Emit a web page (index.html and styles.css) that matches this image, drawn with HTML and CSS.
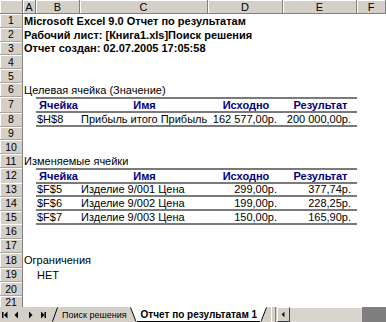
FILE: index.html
```html
<!DOCTYPE html>
<html lang="ru">
<head>
    <meta charset="UTF-8">
    <title>Отчет по результатам 1</title>
    <link rel="stylesheet" href="styles.css">
</head>
<body>
    <div class="sheet">
        <div class="row head">
            <div class="corner"></div>
            <div class="ch">A</div>
            <div class="ch">B</div>
            <div class="ch">C</div>
            <div class="ch">D</div>
            <div class="ch">E</div>
            <div class="ch">F</div>
        </div>
        <div class="row"><div class="rh">1</div><div class="cell wide bold">Microsoft Excel 9.0 Отчет по результатам</div></div>
        <div class="row"><div class="rh">2</div><div class="cell wide bold">Рабочий лист: [Книга1.xls]Поиск решения</div></div>
        <div class="row"><div class="rh">3</div><div class="cell wide bold">Отчет создан: 02.07.2005 17:05:58</div></div>
        <div class="row"><div class="rh">4</div></div>
        <div class="row"><div class="rh">5</div></div>
        <div class="row"><div class="rh">6</div><div class="cell wide">Целевая ячейка (Значение)</div></div>

        <div class="row tall">
            <div class="rh">7</div><div class="cell"></div>
            <div class="cell th bt bb">Ячейка</div>
            <div class="cell th bt bb">Имя</div>
            <div class="cell th bt bb">Исходно</div>
            <div class="cell th bt bb">Результат</div>
        </div>
        <div class="row">
            <div class="rh">8</div><div class="cell"></div>
            <div class="cell bb">$H$8</div>
            <div class="cell bb">Прибыль итого Прибыль</div>
            <div class="cell num bb">162 577,00р.</div>
            <div class="cell num bb">200 000,00р.</div>
        </div>
        <div class="row"><div class="rh">9</div></div>
        <div class="row"><div class="rh">10</div></div>
        <div class="row"><div class="rh">11</div><div class="cell wide">Изменяемые ячейки</div></div>

        <div class="row mid">
            <div class="rh">12</div><div class="cell"></div>
            <div class="cell th bt bb">Ячейка</div>
            <div class="cell th bt bb">Имя</div>
            <div class="cell th bt bb">Исходно</div>
            <div class="cell th bt bb">Результат</div>
        </div>
        <div class="row">
            <div class="rh">13</div><div class="cell"></div>
            <div class="cell bb">$F$5</div>
            <div class="cell bb">Изделие 9/001 Цена</div>
            <div class="cell num bb">299,00р.</div>
            <div class="cell num bb">377,74р.</div>
        </div>
        <div class="row">
            <div class="rh">14</div><div class="cell"></div>
            <div class="cell bb">$F$6</div>
            <div class="cell bb">Изделие 9/002 Цена</div>
            <div class="cell num bb">199,00р.</div>
            <div class="cell num bb">228,25р.</div>
        </div>
        <div class="row">
            <div class="rh">15</div><div class="cell"></div>
            <div class="cell bb">$F$7</div>
            <div class="cell bb">Изделие 9/003 Цена</div>
            <div class="cell num bb">150,00р.</div>
            <div class="cell num bb">165,90р.</div>
        </div>
        <div class="row low"><div class="rh">16</div></div>
        <div class="row low"><div class="rh">17</div></div>
        <div class="row low"><div class="rh">18</div><div class="cell wide">Ограничения</div></div>
        <div class="row low"><div class="rh">19</div><div class="cell"></div><div class="cell">НЕТ</div></div>
        <div class="row low"><div class="rh">20</div></div>
        <div class="row last"><div class="rh">21</div></div>
    </div>

    <div class="tabbar">
        <svg class="nav" width="52" height="15" viewBox="0 0 52 15">
            <rect x="2" y="5" width="1.5" height="6" fill="#000"/>
            <path d="M7.5 4.5 L4 8 L7.5 11.5 Z" fill="#000"/>
            <path d="M18 4.5 L14.5 8 L18 11.5 Z" fill="#000"/>
            <path d="M29 4.5 L32.5 8 L29 11.5 Z" fill="#000"/>
            <path d="M41 4.5 L44.5 8 L41 11.5 Z" fill="#000"/>
            <rect x="44.5" y="5" width="1.5" height="6" fill="#000"/>
        </svg>
        <div class="tab">
            <svg width="6" height="15" viewBox="0 0 6 15"><line x1="0.5" y1="14.5" x2="5.5" y2="0.5" stroke="#000"/></svg>
            <span class="tab-label">Поиск решения</span>
        </div>
        <div class="tab active">
            <svg width="7" height="15" viewBox="0 0 7 15"><polygon points="0,0 7,0 7,15 5.5,15" fill="#fff"/><line x1="0.5" y1="0.5" x2="6" y2="14.5" stroke="#000"/></svg>
            <span class="tab-label">Отчет по результатам 1</span>
            <svg width="7" height="15" viewBox="0 0 7 15"><polygon points="0,0 7,0 1.5,15 0,15" fill="#fff"/><line x1="1" y1="14.5" x2="6.5" y2="0.5" stroke="#000"/></svg>
        </div>
        <div class="split"></div>
        <div class="sbtn">
            <svg width="12" height="13" viewBox="0 0 12 13"><path d="M7 3.5 L4 6.5 L7 9.5 Z" fill="#000"/></svg>
        </div>
        <div class="track"></div>
        <div class="track dark"></div>
    </div>
</body>
</html>
```

FILE: styles.css
```css
body {
    margin: 0;
    width: 386px;
    height: 322px;
    overflow: hidden;
    background-color: #fff;
    font-family: 'Liberation Sans', Arial, sans-serif;
    font-size: 11px;
    color: #000;
}
.sheet {
    height: 307px;
    overflow: hidden;
}
.row {
    display: grid;
    grid-template-columns: 23px 13px 44px 128px 75px 74px 1fr;
    height: 13.8px;
}
.row.tall {
    height: 16px;
}
.row.mid {
    height: 15px;
}
.row.low {
    height: 14.4px;
}
.row.head {
    height: 14px;
}
.row.last {
    height: 10.6px;
}
.corner, .ch, .rh {
    background-color: #d4d0c8;
    box-sizing: border-box;
    border-right: 1px solid #808080;
    border-bottom: 1px solid #808080;
    box-shadow: inset 1px 1px 0 #fff;
}
.ch {
    display: flex;
    align-items: center;
    justify-content: center;
    font-size: 11px;
}
.rh {
    display: flex;
    align-items: center;
    justify-content: center;
    font-size: 10.5px;
    border-bottom-color: #a8a59e;
}
.row.last .rh {
    border-bottom: none;
}
.cell {
    display: flex;
    align-items: center;
    box-sizing: border-box;
    padding-left: 1px;
    white-space: nowrap;
    overflow: visible;
}
.cell.wide {
    grid-column: 2 / -1;
}
.bold {
    font-weight: bold;
}
.th {
    justify-content: center;
    font-weight: bold;
    color: #000080;
}
.num {
    justify-content: flex-end;
    padding-right: 6px;
}
.bt {
    border-top: 2px solid #7a7a7a;
}
.bb {
    border-bottom: 2px solid #7a7a7a;
}
.tabbar {
    display: flex;
    height: 15px;
    background-color: #d4d0c8;
    align-items: stretch;
}
.nav {
    flex: none;
}
.tab {
    display: flex;
    align-items: center;
    font-size: 9px;
}
.tab-label {
    padding: 0 3px 0 4px;
}
.tab.active {
    font-weight: bold;
    font-size: 10px;
}
.tab.active .tab-label {
    background-color: #fff;
    align-self: stretch;
    display: flex;
    align-items: center;
    border-bottom: 1px solid #000;
    box-sizing: border-box;
}
.split {
    width: 3px;
    margin-left: 4px;
    border-left: 1px solid #fff;
    border-right: 1px solid #808080;
}
.sbtn {
    width: 13px;
    margin-left: 1px;
    box-sizing: border-box;
    border: 1px solid;
    border-color: #fff #404040 #404040 #fff;
    display: flex;
    align-items: center;
    justify-content: center;
}
.track {
    flex: 1;
    background-color: #d8d5ce;
    border-top: 1px solid #fff;
}
.track.dark {
    flex: none;
    width: 24px;
    background-color: #7f7f7f;
    border-top: none;
}
```
